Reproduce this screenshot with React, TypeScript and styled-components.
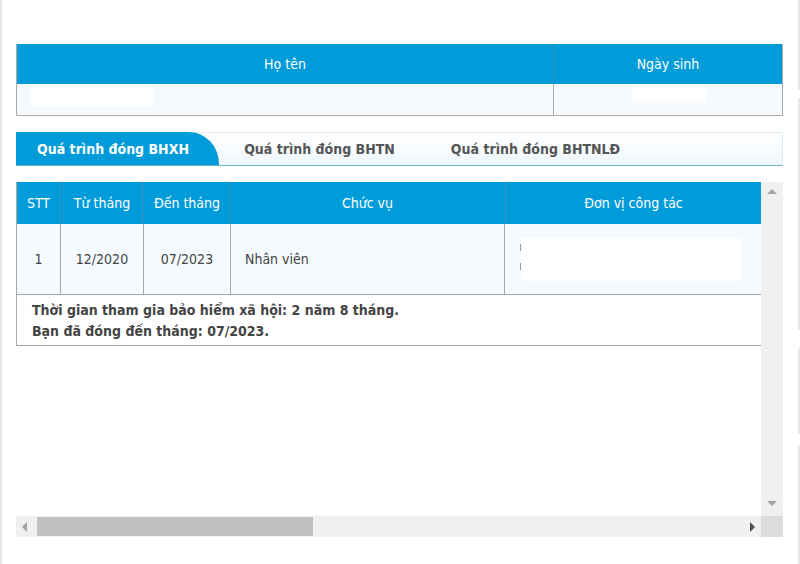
import React from "react";
import styled, { createGlobalStyle } from "styled-components";

const Global = createGlobalStyle`
  html, body { margin: 0; padding: 0; background: #fff; }
  body { font-family: "DejaVu Sans Condensed", "DejaVu Sans", Verdana, sans-serif; font-stretch: condensed; color: #444; }
`;

const Page = styled.div`
  position: relative;
  width: 800px;
  height: 564px;
  box-sizing: border-box;
  padding: 44px 17px 0 14px;
  border-left: 2px solid #e6e6e6;
  overflow: hidden;
`;

const EdgeLine = styled.div<{ $top: number; $h: number }>`
  position: absolute;
  right: 0;
  width: 2px;
  top: ${(p) => p.$top}px;
  height: ${(p) => p.$h}px;
  background: #e8e8e8;
`;

const InfoTable = styled.div`
  display: grid;
  grid-template-columns: 537px 1fr;
  border: 1px solid #a9a9a9;
  border-top: none;
  width: 767px;
  box-sizing: border-box;
`;

const HeadCell = styled.div<{ $h: number; $divider?: boolean }>`
  height: ${(p) => p.$h}px;
  background: #009bd9;
  color: #fff;
  font-size: 14px;
  display: flex;
  align-items: center;
  justify-content: center;
  border-right: ${(p) => (p.$divider ? "1px solid #3b8fb8" : "none")};
  box-sizing: border-box;
`;

const InfoCell = styled.div<{ $divider?: boolean; $pad: number }>`
  height: 31px;
  background: #f5faff;
  border-right: ${(p) => (p.$divider ? "1px solid #a9a9a9" : "none")};
  padding-left: ${(p) => p.$pad}px;
  padding-top: 3px;
  box-sizing: border-box;
`;

const Redact = styled.span<{ $w: number; $h: number }>`
  display: block;
  width: ${(p) => p.$w}px;
  height: ${(p) => p.$h}px;
  background: #fff;
`;

const Tabs = styled.div`
  margin-top: 16px;
  width: 767px;
  height: 34px;
  display: flex;
  box-sizing: border-box;
  border-top: 1px solid #dcedf5;
  border-right: 1px solid #dcedf5;
  border-bottom: 1px solid #6fb6c8;
  background: linear-gradient(#ffffff, #eef7fc);
`;

const Tab = styled.div<{ $active?: boolean; $w: number }>`
  width: ${(p) => p.$w}px;
  height: 33px;
  margin-top: -1px;
  display: flex;
  align-items: center;
  justify-content: center;
  box-sizing: border-box;
  padding-right: ${(p) => (p.$active ? "9px" : "0")};
  font-size: 14px;
  font-weight: bold;
  color: ${(p) => (p.$active ? "#fff" : "#555")};
  background: ${(p) => (p.$active ? "#009bd9" : "transparent")};
  border-top-right-radius: ${(p) => (p.$active ? "30px 32px" : "0")};
`;

const Scroller = styled.div`
  margin-top: 16px;
  width: 767px;
  display: grid;
  grid-template-columns: 745px 22px;
  grid-template-rows: 334px 21px;
`;

const Viewport = styled.div`
  overflow: hidden;
  background: #fff;
`;

const DataTable = styled.div`
  display: grid;
  grid-template-columns: 44px 83px 87px 274px 257px;
  width: 745px;
  border-left: 1px solid #a9a9a9;
  box-sizing: border-box;
`;

const DHead = styled.div<{ $last?: boolean }>`
  height: 42px;
  background: #009bd9;
  color: #fff;
  font-size: 14px;
  display: flex;
  align-items: center;
  justify-content: center;
  border-right: ${(p) => (p.$last ? "none" : "1px solid #3b8fb8")};
  box-sizing: border-box;
`;

const DCell = styled.div<{ $left?: boolean; $last?: boolean }>`
  height: 71px;
  background: #f5faff;
  font-size: 14px;
  color: #444;
  display: flex;
  align-items: center;
  justify-content: ${(p) => (p.$left ? "flex-start" : "center")};
  padding-left: ${(p) => (p.$left ? "14px" : "0")};
  border-right: ${(p) => (p.$last ? "none" : "1px solid #a9a9a9")};
  border-bottom: 1px solid #a9a9a9;
  box-sizing: border-box;
`;

const OrgCell = styled.div`
  height: 71px;
  background: #f5faff;
  border-bottom: 1px solid #a9a9a9;
  padding: 14px 0 0 15px;
  box-sizing: border-box;
  display: flex;
`;

const Mark = styled.span`
  display: flex;
  flex-direction: column;
  gap: 12px;
  padding-top: 6px;
  width: 1px;
  & > i { display: block; width: 1px; height: 7px; background: #999; }
`;

const Summary = styled.div`
  grid-column: 1 / -1;
  height: 51px;
  border-bottom: 1px solid #a9a9a9;
  padding: 5px 0 0 15px;
  box-sizing: border-box;
  font-size: 14px;
  font-weight: bold;
  color: #444;
  line-height: 21px;
`;

const VTrack = styled.div`
  background: #f0f0f0;
  display: flex;
  flex-direction: column;
  justify-content: space-between;
  align-items: center;
  padding: 7px 0 10px;
`;

const HTrack = styled.div`
  background: #f0f0f0;
  display: flex;
  align-items: center;
  padding: 0 6px 0 6px;
  box-sizing: border-box;
`;

const Thumb = styled.div`
  width: 276px;
  height: 19px;
  background: #c1c1c1;
  margin-left: 10px;
`;

const Corner = styled.div`
  background: #dcdcdc;
`;

const Spacer = styled.div`
  flex: 1;
`;

const Arrow = ({ dir, color }: { dir: "up" | "down" | "left" | "right"; color: string }) => {
  const pts = {
    up: "0,5 5,0 10,5",
    down: "0,0 10,0 5,5",
    left: "5,0 5,10 0,5",
    right: "0,0 0,10 5,5",
  }[dir];
  const vertical = dir === "up" || dir === "down";
  return (
    <svg width={vertical ? 10 : 5} height={vertical ? 5 : 10} viewBox={vertical ? "0 0 10 5" : "0 0 5 10"}>
      <polygon points={pts} fill={color} />
    </svg>
  );
};

export default function App() {
  return (
    <>
      <Global />
      <Page>
        <EdgeLine $top={0} $h={90} />
        <EdgeLine $top={98} $h={232} />
        <EdgeLine $top={348} $h={86} />
        <EdgeLine $top={445} $h={119} />
        <InfoTable>
          <HeadCell $h={40} $divider>Họ tên</HeadCell>
          <HeadCell $h={40}>Ngày sinh</HeadCell>
          <InfoCell $divider $pad={14}>
            <Redact $w={122} $h={19} />
          </InfoCell>
          <InfoCell $pad={78}>
            <Redact $w={75} $h={16} />
          </InfoCell>
        </InfoTable>

        <Tabs>
          <Tab $active $w={203}>Quá trình đóng BHXH</Tab>
          <Tab $w={201}>Quá trình đóng BHTN</Tab>
          <Tab $w={231}>Quá trình đóng BHTNLĐ</Tab>
        </Tabs>

        <Scroller>
          <Viewport>
            <DataTable>
              <DHead>STT</DHead>
              <DHead>Từ tháng</DHead>
              <DHead>Đến tháng</DHead>
              <DHead>Chức vụ</DHead>
              <DHead $last>Đơn vị công tác</DHead>
              <DCell>1</DCell>
              <DCell>12/2020</DCell>
              <DCell>07/2023</DCell>
              <DCell $left>Nhân viên</DCell>
              <OrgCell>
                <Mark>
                  <i />
                  <i />
                </Mark>
                <Redact $w={220} $h={43} />
              </OrgCell>
              <Summary>
                Thời gian tham gia bảo hiểm xã hội: 2 năm 8 tháng.
                <br />
                Bạn đã đóng đến tháng: 07/2023.
              </Summary>
            </DataTable>
          </Viewport>
          <VTrack>
            <Arrow dir="up" color="#a3a3a3" />
            <Arrow dir="down" color="#a3a3a3" />
          </VTrack>
          <HTrack>
            <Arrow dir="left" color="#a3a3a3" />
            <Thumb />
            <Spacer />
            <Arrow dir="right" color="#505050" />
          </HTrack>
          <Corner />
        </Scroller>
      </Page>
    </>
  );
}
